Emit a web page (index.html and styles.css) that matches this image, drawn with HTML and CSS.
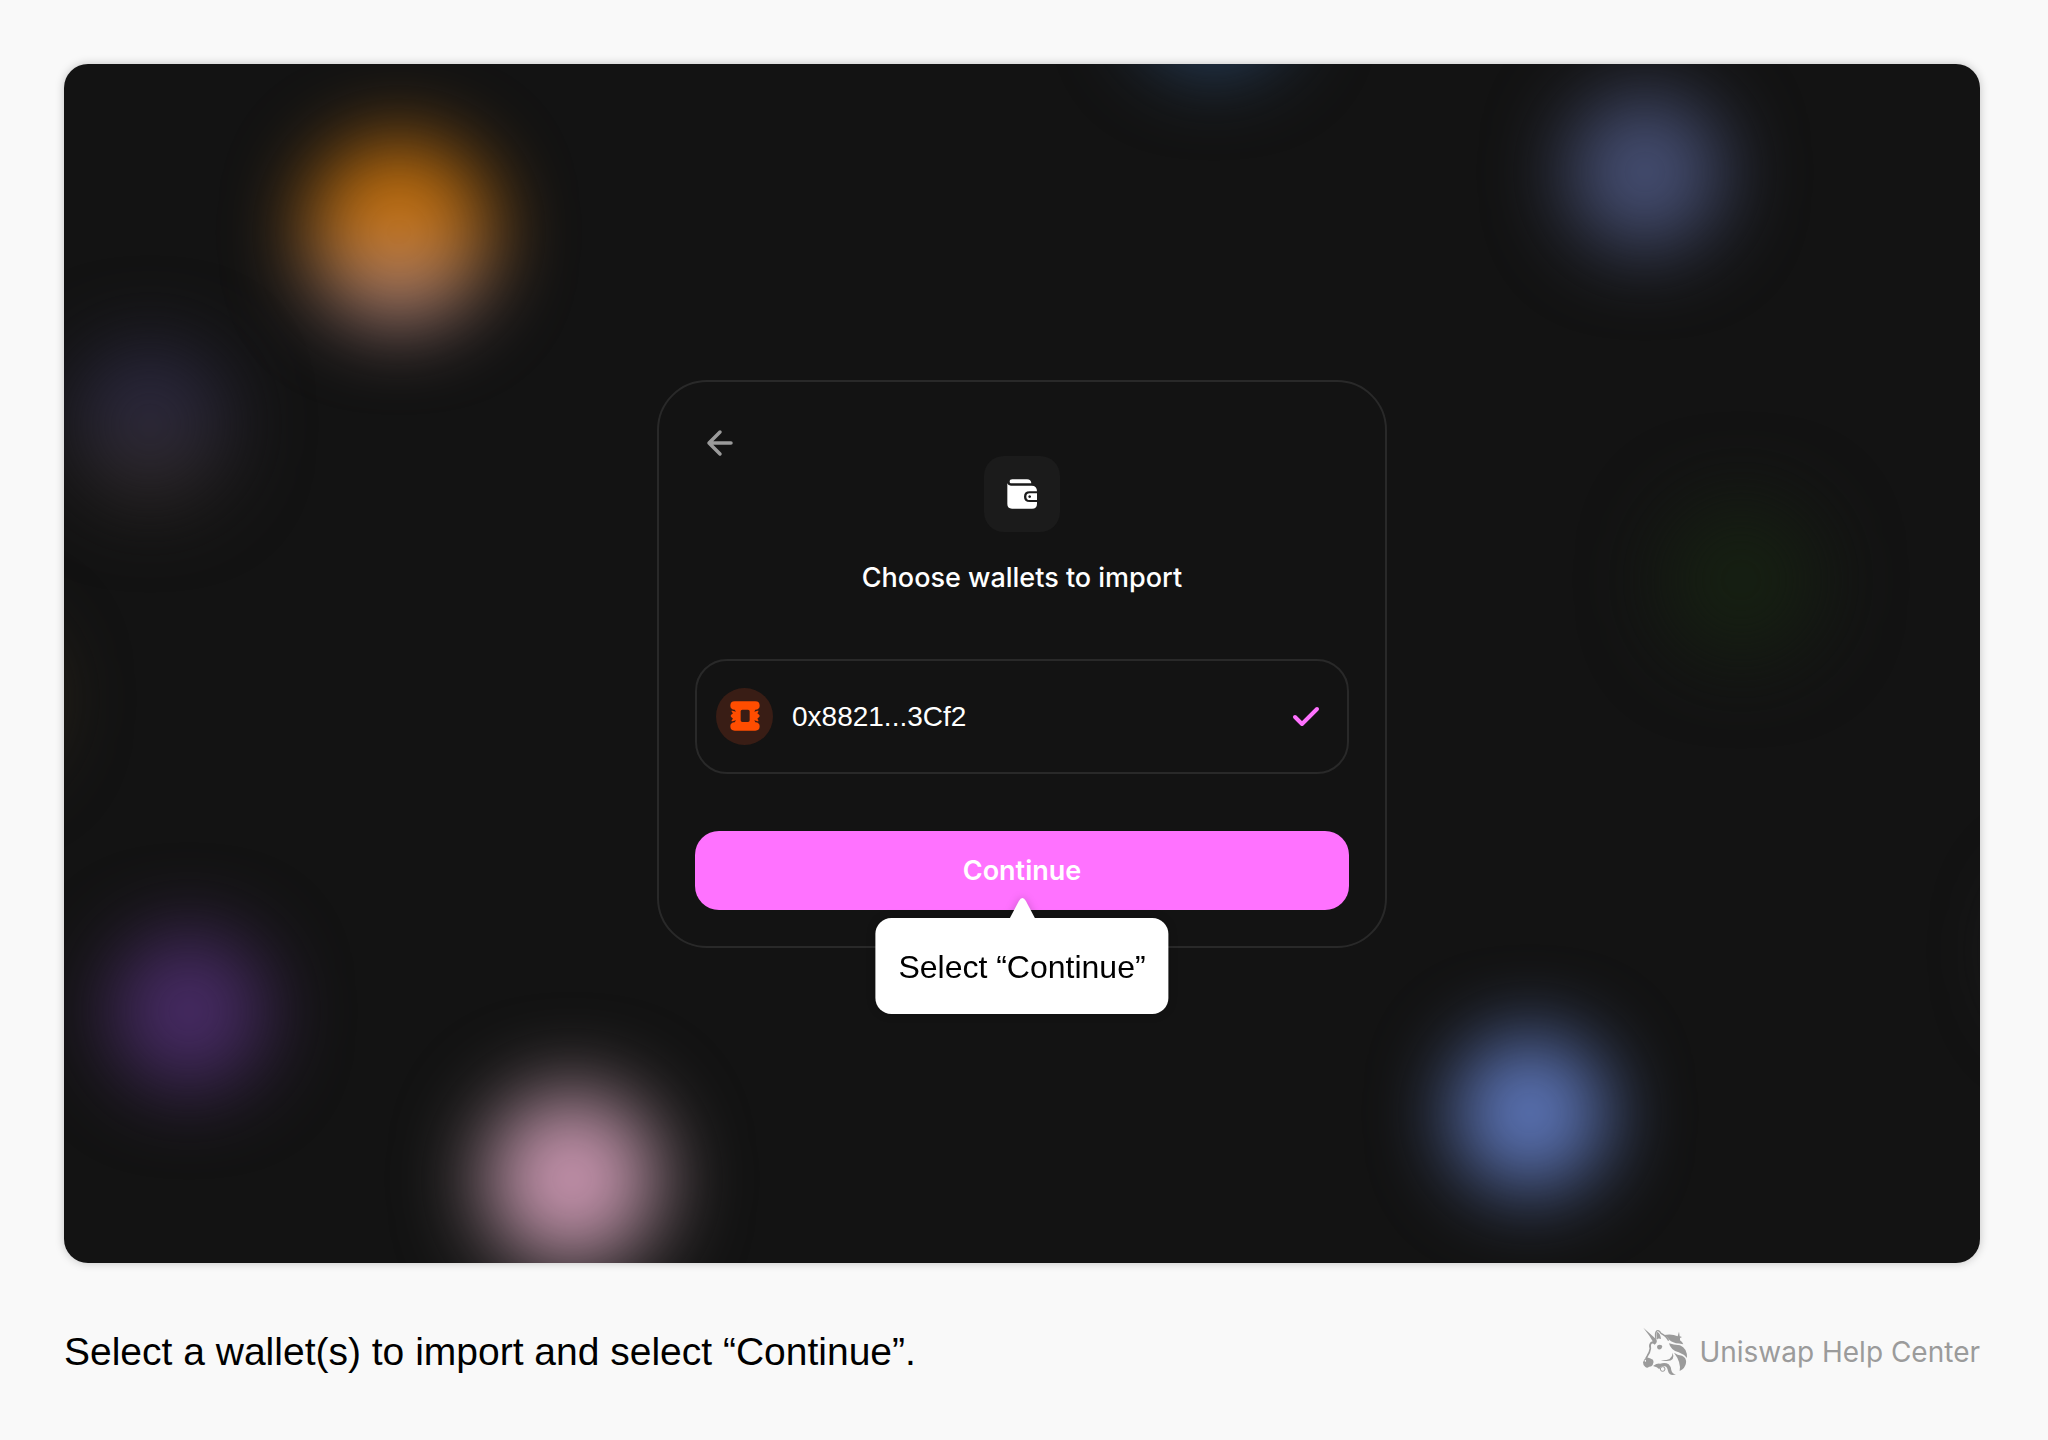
FILE: index.html
```html
<!DOCTYPE html>
<html lang="en">
<head>
<meta charset="utf-8">
<meta name="viewport" content="width=device-width, initial-scale=1">
<title>Choose wallets to import</title>
<link rel="stylesheet" href="styles.css">
</head>
<body>
<main class="stage">
  <div class="glows" aria-hidden="true">
    <span class="glow glow-orange"></span>
    <span class="glow glow-slate"></span>
    <span class="glow glow-olive"></span>
    <span class="glow glow-purple"></span>
    <span class="glow glow-pink"></span>
    <span class="glow glow-teal"></span>
    <span class="glow glow-indigo"></span>
    <span class="glow glow-green"></span>
    <span class="glow glow-blue"></span>
    <span class="glow glow-grey"></span>
  </div>
  <form class="card">
    <header class="card-head">
      <button class="back" type="button" aria-label="Back">
        <svg viewBox="0 0 32 32" width="32" height="32" fill="none" stroke="#9b9b9b" stroke-width="3.500" stroke-linecap="round" stroke-linejoin="round"><path d="M27 16H5M16 5L5 16l11 11"/></svg>
      </button>
      <span class="tile">
        <svg viewBox="0 0 90 90" width="30" height="30"><path fill="#fff" d="M12 13Q8 13 8 8Q8 1 16 1H60Q72 1 73 13ZM1 13Q3 20 12 20H74Q90 20 90 37H68Q51 37 51 53Q51 69 68 69H90V74Q90 89 75 89H15Q1 89 1 75ZM90 43V63H68Q58 63 58 53Q58 43 68 43ZM68 49a4 4 0 1 0 .1 0Z" fill-rule="evenodd"/></svg>
      </span>
    </header>
    <h1 class="title">Choose wallets to import</h1>
    <label class="wallet">
      <input class="wallet-input" type="checkbox" checked>
      <span class="avatar">
        <svg viewBox="0 0 90 90" width="30" height="30"><path fill="#ff4d00" fill-rule="evenodd" d="M14 1H76Q89 1 89 14Q89 25 76 26L73 32L83 29Q86 28 85 32L82 37L88 42Q90 45 88 47L82 53L85 58Q86 62 83 61L73 58L76 64Q89 65 89 76Q89 89 76 89H14Q1 89 1 76Q1 65 14 64L18 58L7 61Q4 62 5 58L9 53L3 47Q1 45 3 42L9 37L5 32Q4 28 7 29L18 32L14 26Q1 25 1 14Q1 1 14 1ZM37 26Q32 26 32 31V58Q32 63 37 63H54Q59 63 59 58V31Q59 26 54 26Z"/></svg>
      </span>
      <span class="address">0x8821...3Cf2</span>
      <svg class="check" viewBox="0 0 28 22" width="28" height="22" fill="none" stroke="#ff72ff" stroke-width="4" stroke-linecap="round" stroke-linejoin="round"><path d="M3 12l7 7L25 4"/></svg>
    </label>
    <div class="action">
      <button class="continue" type="button" aria-describedby="hint">Continue</button>
      <div class="hint" id="hint" role="tooltip">
        <svg class="hint-tip" viewBox="0 0 26 21" width="26" height="21"><path fill="#fff" d="M0 21L9.500 3Q13-3 16.500 3L26 21Z"/></svg>
        Select “Continue”
      </div>
    </div>
  </form>
</main>
<footer class="footer">
  <p class="caption">Select a wallet(s) to import and select “Continue”.</p>
  <a class="brand" href="#">
    <svg viewBox="70 54 138 147" width="46" height="49" fill="#9b9b9b">
      <path d="M74 56L112 90Q117 96 113 102L108 107Q104 103 98 104L96 99L102 97L92 80Z"/>
      <path d="M98 101Q91 108 95 118Q93 131 87 139L82 148" fill="none" stroke="#9b9b9b" stroke-width="5"/>
      <path d="M84 145Q94 147 103 152Q107 158 102 168Q98 174 91 173Q86 179 80 174Q73 170 73 160Q75 150 84 145ZM80 152a2 3 0 1 0 .1 0Z" fill-rule="evenodd"/>
      <path d="M112 91Q108 72 114 66Q120 62 127 73Q143 81 150 95" fill="none" stroke="#9b9b9b" stroke-width="4"/>
      <path d="M114 68Q125 70 127 90Q118 86 115 92Q112 78 114 68Z"/>
      <path d="M136 78Q160 73 177 82L181 68L183 82L190 84L184 87L184 94Q191 98 194 106Q180 103 172 103Q154 98 148 88Q143 82 136 78Z"/>
      <path d="M151 103Q164 108 184 109Q206 118 205 147Q196 136 180 130Q156 124 151 103Z"/>
      <path d="M166 131Q176 138 190 140Q204 146 202 162Q200 178 183 186Q188 160 166 131Z"/>
      <path d="M115 113a8 6 0 1 1 16 0Q128 123 119 121Q115 118 115 113Z"/>
      <path d="M126 154Q162 155 162 131Q171 155 145 156Q134 157 126 154Z"/>
      <path d="M103 171Q116 162 124 164Q140 159 150 166Q157 172 158 184Q161 196 172 196Q152 202 148 186Q146 174 139 172Q126 169 122 181Q116 174 103 171Z"/>
      <circle cx="132" cy="180" r="7" fill="none" stroke="#9b9b9b" stroke-width="3"/>
    </svg>
    Uniswap Help Center
  </a>
</footer>
</body>
</html>
```
FILE: styles.css
```css
* { box-sizing: border-box; }

body {
  margin: 0;
  min-height: 100vh;
  padding: 64px 68px 0 64px;
  display: flex;
  flex-direction: column;
  background: #f9f9f9;
  color: #000;
  font-family: "Liberation Sans", Arial, sans-serif;
}

.stage {
  position: relative;
  flex: 1;
  display: flex;
  align-items: center;
  justify-content: center;
  padding: 64px 24px;
  border-radius: 24px;
  background: #131313;
  box-shadow: 0 0 10px rgba(0, 0, 0, 0.22);
}

/* Blurred token colours floating behind the card */
.glows {
  position: absolute;
  inset: 0;
  overflow: hidden;
  border-radius: inherit;
}

.glow {
  position: absolute;
  width: 156px;
  height: 156px;
  margin: -78px 0 0 -78px;
  border-radius: 50%;
  filter: blur(40px);
}

.glow-orange {
  width: 184px;
  height: 184px;
  margin: -92px 0 0 -92px;
  left: 17.5%;
  top: 14%;
  background: linear-gradient(#c4700c 54%, #b0847c 72%);
}
.glow-slate { left: 4.5%; top: 30%; background: linear-gradient(#2b2840 50%, #302a2c 65%); }
.glow-olive { left: -5%; top: 53%; background: #352c1c; }
.glow-purple { left: 6.5%; top: 79%; background: #482b66; }
.glow-pink {
  width: 192px;
  height: 192px;
  margin: -96px 0 0 -96px;
  left: 26.5%;
  top: 93%;
  background: radial-gradient(#c892ae 48%, #706a69 60%);
}
.glow-teal { left: 60%; top: -6%; background: #2a4668; }
.glow-indigo { left: 82.5%; top: 9%; background: #464f74; }
.glow-green { left: 87.5%; top: 43%; background: #162012; }
.glow-blue { left: 76.5%; top: 87.5%; background: #5c75b8; }
.glow-grey { left: 106%; top: 74%; background: #29292b; }

.card {
  position: relative;
  width: 100%;
  max-width: 730px;
  padding: 45px 36px 36px;
  border: 2px solid #292929;
  border-radius: 50px;
  background: #131313;
  color: #fff;
}

.card-head {
  display: grid;
  grid-template-columns: 1fr auto 1fr;
  align-items: start;
}

.back {
  width: 32px;
  height: 32px;
  margin-left: 9px;
  padding: 0;
  border: 0;
  background: none;
  cursor: pointer;
}

.back svg { display: block; }

.tile {
  display: flex;
  align-items: center;
  justify-content: center;
  width: 76px;
  height: 76px;
  margin-top: 29px;
  border-radius: 20px;
  background: #1b1b1b;
}

.title {
  margin: 28px 0 63px;
  font: 500 27px/36px Inter, sans-serif;
  text-align: center;
}

.wallet {
  display: flex;
  align-items: center;
  gap: 19px;
  height: 115px;
  padding: 0 27px 0 19px;
  border: 2px solid #292929;
  border-radius: 32px;
  cursor: pointer;
}

.wallet-input {
  position: absolute;
  opacity: 0;
}

.avatar {
  display: flex;
  align-items: center;
  justify-content: center;
  width: 57px;
  height: 57px;
  border-radius: 50%;
  background: #391d15;
}

.address {
  flex: 1;
  padding-top: 2px;
  font-size: 28px;
  line-height: 36px;
}

.wallet-input:not(:checked) ~ .check { visibility: hidden; }

.action {
  position: relative;
  margin-top: 57px;
}

.continue {
  display: block;
  width: 100%;
  height: 79px;
  padding: 2px 0 0;
  border: 0;
  border-radius: 24px;
  background: #ff72ff;
  color: #fff;
  font: 600 27px/36px Inter, sans-serif;
  cursor: pointer;
}

.hint {
  position: absolute;
  top: 87px;
  left: 50%;
  transform: translateX(-50%);
  padding: 31px 23px 29px;
  border-radius: 16px;
  background: #fff;
  color: #000;
  font-size: 32px;
  line-height: 36px;
  white-space: nowrap;
  filter: drop-shadow(0 0 4px rgba(0, 0, 0, 0.2));
}

.hint-tip {
  position: absolute;
  bottom: 100%;
  left: 50%;
  margin: 0 0 -1px -13px;
}

.footer {
  display: flex;
  align-items: center;
  justify-content: space-between;
  gap: 32px;
  padding: 64px 0;
}

.caption {
  margin: 0;
  padding-top: 1px;
  font-size: 39px;
  line-height: 48px;
}

.brand {
  display: flex;
  align-items: center;
  gap: 11px;
  color: #9b9b9b;
  font: 400 28px/36px Inter, sans-serif;
  text-decoration: none;
}
```
